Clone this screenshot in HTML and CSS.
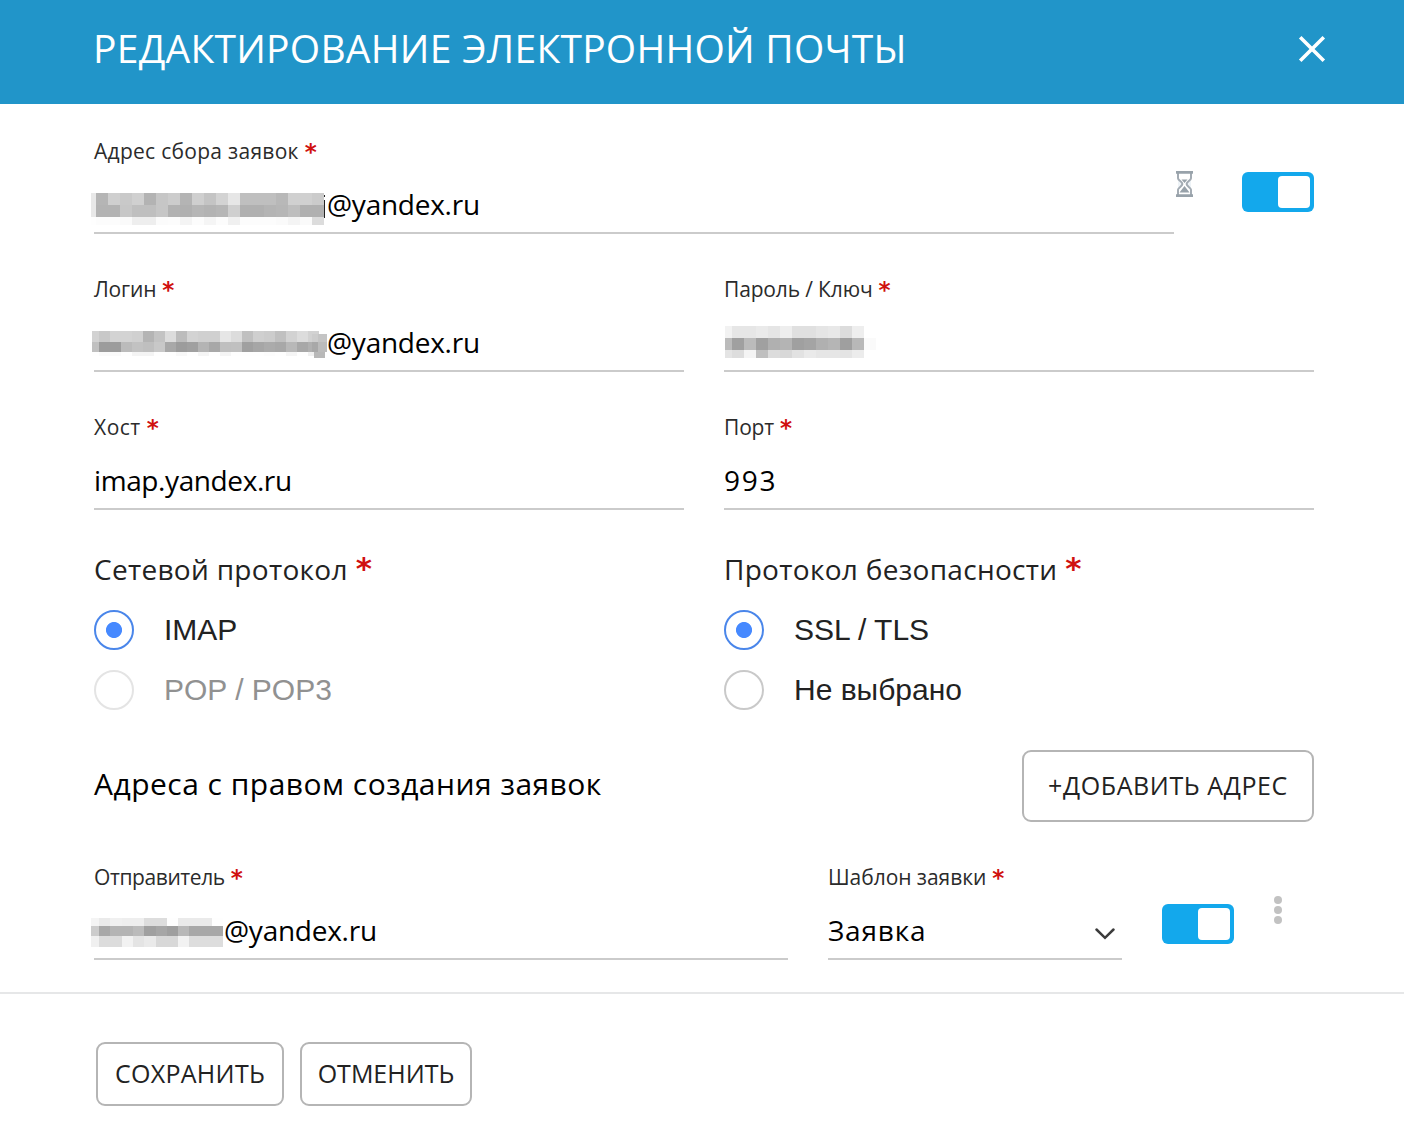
FILE: index.html
```html
<!DOCTYPE html>
<html lang="ru">
<head>
<meta charset="utf-8">
<title>Редактирование электронной почты</title>
<link rel="stylesheet" href="styles.css">
</head>
<body>
<header class="header">
  <h1 class="title">РЕДАКТИРОВАНИЕ ЭЛЕКТРОННОЙ ПОЧТЫ</h1>
  <svg class="close" width="28" height="28" viewBox="0 0 28 28"><path d="M2.200 2.200 25.800 25.800M25.800 2.200 2.200 25.800"/></svg>
</header>

<main class="form">
  <div class="row row-address">
    <div class="field field-address">
      <div class="label ls-address">Адрес сбора заявок<span class="star">*</span></div>
      <div class="value"><svg class="mask" data-mask="address" width="233" height="40"></svg><span class="ls-domain">@yandex.ru</span></div>
    </div>
    <svg class="hourglass" width="19" height="28" viewBox="0 0 19 28">
      <path class="glass" d="M3 3v5.200c0 2.200 4.400 3.600 4.400 5.800S3 17.600 3 19.800V25M16 3v5.200c0 2.200-4.400 3.600-4.400 5.800s4.400 3.600 4.400 5.800V25"/>
      <path class="sand" d="M1 1h17v2.800H1zM1 24.200h17V27H1zM6.500 9.500h6L9.500 13zM9.500 16l5 6.500h-10z"/>
    </svg>
    <div class="toggle"><span class="knob"></span></div>
  </div>

  <div class="row columns">
    <div class="field">
      <div class="label">Логин<span class="star">*</span></div>
      <div class="value"><svg class="mask" data-mask="login" width="233" height="40"></svg><span class="ls-domain">@yandex.ru</span></div>
    </div>
    <div class="field">
      <div class="label">Пароль / Ключ<span class="star">*</span></div>
      <div class="value"><svg class="mask" data-mask="password" width="150" height="40"></svg></div>
    </div>
  </div>

  <div class="row columns">
    <div class="field">
      <div class="label ls-host">Хост<span class="star">*</span></div>
      <div class="value ls-imap"><span>imap.yandex.ru</span></div>
    </div>
    <div class="field">
      <div class="label">Порт<span class="star">*</span></div>
      <div class="value ls-port"><span>993</span></div>
    </div>
  </div>

  <div class="columns protocols">
    <div class="group">
      <div class="group-title">Сетевой протокол<span class="star star-big">*</span></div>
      <div class="radio"><span class="dot dot-on"></span>IMAP</div>
      <div class="radio radio-off"><span class="dot"></span>POP / POP3</div>
    </div>
    <div class="group">
      <div class="group-title">Протокол безопасности<span class="star star-big">*</span></div>
      <div class="radio"><span class="dot dot-on"></span>SSL / TLS</div>
      <div class="radio"><span class="dot"></span>Не выбрано</div>
    </div>
  </div>

  <div class="senders">
    <h2 class="senders-title">Адреса с правом создания заявок</h2>
    <button class="button button-add">+ДОБАВИТЬ АДРЕС</button>
  </div>

  <div class="sender-row">
    <div class="field field-sender">
      <div class="label ls-sender">Отправитель<span class="star">*</span></div>
      <div class="value"><svg class="mask" data-mask="sender" width="130" height="40"></svg><span class="ls-domain">@yandex.ru</span></div>
    </div>
    <div class="field field-template">
      <div class="label ls-none">Шаблон заявки<span class="star">*</span></div>
      <div class="value value-select"><span class="ls-template">Заявка</span><svg class="chevron" width="20" height="12" viewBox="0 0 20 12"><path d="M1.500 1.500 10 9.800l8.500-8.300"/></svg></div>
    </div>
    <div class="toggle"><span class="knob"></span></div>
    <svg class="more" width="10" height="30" viewBox="0 0 10 30"><circle cx="5" cy="5" r="4"/><circle cx="5" cy="15" r="4"/><circle cx="5" cy="25" r="4"/></svg>
  </div>
</main>

<footer class="footer">
  <button class="button button-save">СОХРАНИТЬ</button>
  <button class="button button-cancel">ОТМЕНИТЬ</button>
</footer>
<script src="app.js"></script>
</body>
</html>
```

FILE: styles.css
```css
* { box-sizing: border-box; }
body {
  margin: 0;
  background: #fff;
  color: #000;
  font-family: "Open Sans", "Noto Sans", sans-serif;
}
.header {
  display: flex;
  justify-content: space-between;
  height: 104px;
  padding: 0 78px 0 93px;
  background: #2195c9;
  color: #fff;
}
.title {
  margin: 0;
  font-size: 39px;
  font-weight: 400;
  line-height: 95px;
  letter-spacing: .25px;
  white-space: nowrap;
}
.close { margin-top: 35px; fill: none; stroke: #fff; stroke-width: 3.600; }
.form { padding: 32px 90px 32px 94px; border-bottom: 2px solid #e6e7e8; }
.row { margin-bottom: 40px; }
.row-address { display: flex; }
.columns { display: grid; grid-template-columns: 590px 590px; column-gap: 40px; }
.field-address { width: 1080px; }
.field { height: 98px; border-bottom: 2px solid #cbcbcb; }
.label {
  height: 28px;
  margin-bottom: 19px;
  color: #2b2b2b;
  font-size: 21px;
  line-height: 30px;
  letter-spacing: -.15px;
  white-space: nowrap;
}
.star {
  margin-left: 6px;
  color: #d0110f;
  font: 700 23px/0 "DejaVu Sans", sans-serif;
  letter-spacing: 0;
  vertical-align: -1px;
}
.star-big { margin-left: 8px; font-size: 31px; vertical-align: 1px; }
.value { display: flex; height: 40px; font-size: 28px; line-height: 42px; white-space: nowrap; }
.mask { flex: none; overflow: visible; shape-rendering: crispEdges; }
.ls-address { letter-spacing: .28px; }
.ls-host { letter-spacing: .5px; }
.ls-sender { letter-spacing: -.4px; }
.ls-none { letter-spacing: -.05px; }
.ls-domain { letter-spacing: -.25px; }
.ls-imap { letter-spacing: -.4px; }
.ls-port { letter-spacing: 1.800px; }
.ls-template { letter-spacing: .8px; }
.hourglass { margin: 34px 0 0 1px; }
.glass { fill: #eef3f7; stroke: #a3abb3; stroke-width: 2; }
.sand { fill: #98a2aa; }
.toggle {
  width: 72px;
  height: 40px;
  padding: 4px;
  border-radius: 6px;
  background: #13a8ec;
}
.row-address .toggle { margin: 36px 0 0 auto; }
.knob { display: block; width: 32px; height: 32px; margin-left: auto; border-radius: 4px; background: #fff; }
.protocols { margin-top: -1px; }
.group-title {
  height: 40px;
  margin-bottom: 21px;
  color: #222;
  font-size: 28px;
  line-height: 41px;
  letter-spacing: .3px;
}
.radio {
  display: flex;
  align-items: center;
  gap: 30px;
  height: 40px;
  margin-bottom: 20px;
  color: #222;
  font: 30px/40px "Liberation Sans", sans-serif;
}
.radio-off { color: #919191; }
.dot { width: 40px; height: 40px; border: 2px solid #c9c9c9; border-radius: 50%; }
.radio-off .dot { border-color: #e4e4e4; }
.dot-on { border-color: #4a86ea; background: radial-gradient(circle, #4689ff 7.600px, transparent 8.400px); }
.senders { display: flex; align-items: center; justify-content: space-between; margin: 20px 0 40px; }
.senders-title { margin: 0; padding-bottom: 5px; font-size: 30px; font-weight: 400; line-height: 40px; letter-spacing: .48px; }
.button {
  padding: 0 0 2px;
  border: 2px solid #b5b5b5;
  border-radius: 9px;
  background: transparent;
  color: #222;
  font: 25px/34px "Open Sans", "Noto Sans", sans-serif;
  white-space: nowrap;
}
.button-add { width: 292px; height: 72px; letter-spacing: .6px; }
.button-save { width: 188px; height: 64px; letter-spacing: .3px; }
.button-cancel { width: 172px; height: 64px; }
.sender-row { display: flex; align-items: flex-start; }
.field-sender { width: 694px; margin-right: 40px; }
.field-template { width: 294px; margin-right: 40px; }
.value-select { justify-content: space-between; padding-right: 7px; }
.chevron { margin-top: 19px; fill: none; stroke: #3c3c3c; stroke-width: 2.500; stroke-linecap: round; }
.sender-row .toggle { margin-top: 42px; }
.more { margin: 33px 0 0 39px; fill: #c2c2c2; }
.footer { display: flex; gap: 16px; padding: 48px 96px 0; }
```

FILE: app.js
```
// Pixelated blocks that hide the private part of each value.
// Each band: top, bottom, first left edge, then evenly stepped blocks with their greys.
function band(y0, y1, first, start, step, greys) {
  const cells = greys.split(' ').map((g, i) => [i === 0 ? first : start + step * (i - 1), g]);
  return { y0, y1, cells, end: start + step * (cells.length - 1) };
}
const masks = {
  address: [
    band(10, 22, -3, 2, 12, 'e8 b5 cf c9 d0 b3 c6 cc b4 cf c4 d3 e6 bf bf bf b8 d0 d0 cb'),
    band(22, 34, -3, 2, 12, 'e8 b3 b3 c7 bf bf c6 b2 b0 b6 b3 b6 cf b0 b0 b4 b6 be b0 b0'),
    band(34, 42, -3, 2, 12, 'fe fc fc fa ee ee fb fc f4 fc f5 fc f0 fc fc fc fa f4 fa dc')
  ],
  login: [
    band(10, 21, -2, 5, 11, 'd2 c8 d3 d3 d0 b4 c3 dc bc d3 d0 d0 e6 dc c0 cf cc c0 d2 dc d2'),
    band(21, 31, -2, 5, 11, 'c0 9c 9c bb c2 bf c8 a8 9c a0 b4 a8 bf c0 a0 a6 ab a8 b8 a8 b0'),
    band(31, 35, -2, 5, 11, 'fe fa fa fe f4 f4 fe fe f8 fe f5 fe f5 fe fe fe fc fe f5 fe f0'),
    band(13, 21, 218, 224, 9, 'cc c4'),
    band(21, 31, 218, 224, 9, 'a8 bb'),
    band(31, 37, 220, 225, 6, 'b8 b8')
  ],
  password: [
    band(5, 17, 1, 8, 12, 'f2 e6 e6 ea e5 ee e0 e0 e5 e8 dc ee'),
    band(17, 29, 1, 8, 12, 'bb a0 bb a0 b0 b4 a0 a4 b0 b5 9f b8 fa'),
    band(29, 37, 1, 8, 12, 'e4 dd f4 bf dc d8 e2 ea e6 e6 e4 ec')
  ],
  sender: [
    band(9, 17, -3, 5, 11.300, 'f4 ea f0 ee ee dd dd fe ea ea ea fe'),
    band(17, 27, -3, 5, 11.300, 'cc a8 b4 b4 bb a0 a6 9f b8 a8 a8 a8'),
    band(27, 38, -3, 5, 11.300, 'f0 dc dc f2 e4 ea d8 d8 f2 dd dd dd')
  ]
};
function rect(svg, x, y, w, h, fill) {
  const r = document.createElementNS('http://www.w3.org/2000/svg', 'rect');
  Object.entries({ x, y, width: w, height: h, fill }).forEach(([k, v]) => r.setAttribute(k, v));
  svg.append(r);
}
document.querySelectorAll('.mask').forEach(svg => {
  masks[svg.dataset.mask].forEach(b => b.cells.forEach(([x, g], i) => {
    const next = i + 1 < b.cells.length ? b.cells[i + 1][0] : b.end;
    rect(svg, x, b.y0, next - x, b.y1 - b.y0, '#' + g + g + g);
  }));
  if (svg.dataset.mask === 'address') {
    rect(svg, 230, 12, 1, 2, '#222');
    rect(svg, 230, 17, 1, 18, '#222');
  }
});
```
